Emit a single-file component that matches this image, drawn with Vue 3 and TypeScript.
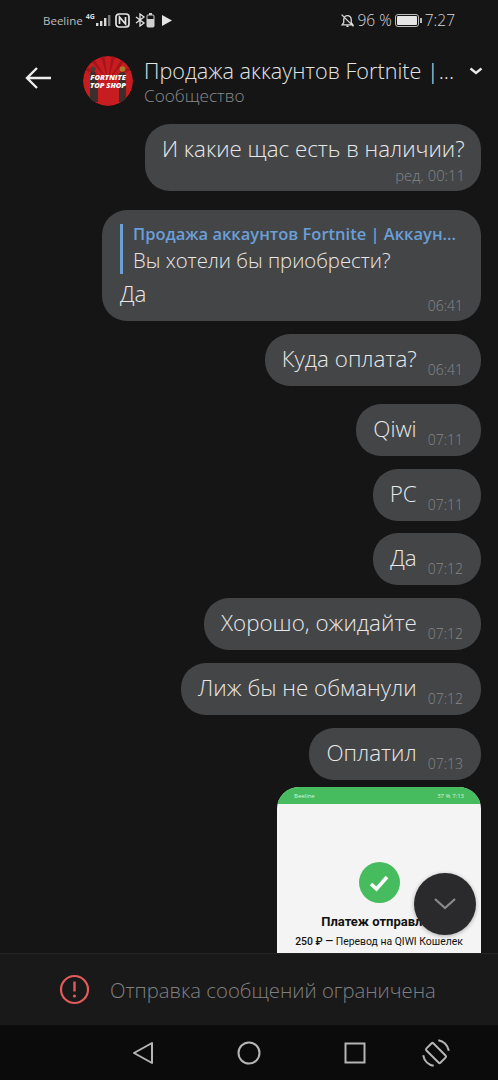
<script setup lang="ts">
interface Msg { text: string; time: string; gap?: boolean; tight?: boolean }
const messages: Msg[] = [
  { text: 'Куда оплата?', time: '06:41', gap: true },
  { text: 'Qiwi', time: '07:11' },
  { text: 'PC', time: '07:11', tight: true },
  { text: 'Да', time: '07:12' },
  { text: 'Хорошо, ожидайте', time: '07:12' },
  { text: 'Лиж бы не обманули', time: '07:12' },
  { text: 'Оплатил', time: '07:13' },
]
const rays = [-60, -36, -12, 12, 36, 60]
</script>

<template>
  <div class="screen">
    <div class="status">
      <div class="status-left">
        <span class="carrier">Beeline</span>
        <span class="net">4G</span>
        <svg width="16" height="13" viewBox="0 0 16 13"><g fill="#d8d8d8"><rect x="0" y="9" width="2.400" height="3"/><rect x="4" y="7" width="2.400" height="5"/><rect x="8" y="4" width="2.400" height="8"/><rect x="12" y="1" width="2.400" height="11" fill="#777"/></g></svg>
        <svg class="nfc" width="15" height="15" viewBox="0 0 15 15"><rect x="1" y="1" width="13" height="13" rx="3" fill="none" stroke="#e4e4e4" stroke-width="1.700"/><path d="M4.500 11V4l6 7V4" fill="none" stroke="#e4e4e4" stroke-width="1.700"/></svg>
        <svg class="bt" width="11" height="14" viewBox="0 0 11 14"><path d="M1 4l8 6-4 3V1l4 3-8 6" fill="none" stroke="#e4e4e4" stroke-width="1.300"/></svg>
        <svg class="batt" width="9" height="15" viewBox="0 0 9 15"><rect x="3" y="0" width="3" height="2" fill="#d0d0d0"/><rect x="1" y="2" width="7" height="12" rx="1" fill="none" stroke="#d0d0d0"/><rect x="1" y="6" width="7" height="8" fill="#d0d0d0"/></svg>
        <svg class="play" width="10" height="11" viewBox="0 0 10 11"><path d="M0 0l10 5.500L0 11z" fill="#e4e4e4"/></svg>
      </div>
      <div class="status-right">
        <svg width="15" height="15" viewBox="0 0 14 14"><path d="M2 11h10l-1.500-2V6a3.500 3.500 0 0 0-7 0v3zM6 12.500h2M1.500 1.500l11 11" fill="none" stroke="#dcdcdc" stroke-width="1.200"/></svg>
        <span class="pct">96 %</span>
        <svg width="27" height="13" viewBox="0 0 27 13"><rect x="0.500" y="0.500" width="23" height="12" rx="2.500" fill="none" stroke="#bbb"/><rect x="2" y="2" width="20" height="9" rx="1" fill="#e6e6e6"/><rect x="25" y="4" width="2" height="5" fill="#bbb"/></svg>
        <span class="pct">7:27</span>
      </div>
    </div>

    <header class="head">
      <svg class="back" width="28" height="24" viewBox="0 0 28 24"><path d="M26 12H2M12 2L2 12l10 10" fill="none" stroke="#ededed" stroke-width="2.400"/></svg>
      <div class="avatar">
        <svg class="avatar-art" width="50" height="50" viewBox="0 0 50 50">
          <circle cx="25" cy="25" r="25" fill="#c81d20"/>
          <path v-for="r in rays" :key="r" d="M25 25L23 -4h4z" fill="#a5141a" :transform="`rotate(${r} 25 25)`"/>
          <path d="M7 46V20q0-5 3-5t3 5l2 8v18zM36 46V21q0-5 3.500-5t3.500 5v25z" fill="#3a2f2c"/>
          <circle cx="10" cy="13" r="2.500" fill="#4a3b36"/>
          <circle cx="39.500" cy="13" r="2.800" fill="#a87a2a"/>
        </svg>
        <span class="logo-text">FORTNITE<br>TOP SHOP</span>
      </div>
      <div class="titles">
        <div class="title">Продажа аккаунтов Fortnite |...</div>
        <div class="sub">Сообщество</div>
      </div>
      <svg class="chev" width="14" height="9" viewBox="0 0 14 9"><path d="M1.500 1.500L7 6l5.500-4.500" fill="none" stroke="#e8e8e8" stroke-width="2.300"/></svg>
    </header>

    <main class="feed">
      <div class="bubble big">
        <div class="big-text">И какие щас есть в наличии?</div>
        <div class="time end">ред. 00:11</div>
      </div>

      <div class="bubble reply">
        <div class="quote">
          <div class="q-name">Продажа аккаунтов Fortnite | Аккаун...</div>
          <div class="q-text">Вы хотели бы приобрести?</div>
        </div>
        <div class="reply-foot">
          <span class="msg">Да</span>
          <span class="time">06:41</span>
        </div>
      </div>

      <div v-for="(m, i) in messages" :key="i" class="bubble line" :class="{ gap: m.gap, tight: m.tight }">
        <span class="msg">{{ m.text }}</span>
        <span class="time">{{ m.time }}</span>
      </div>

      <div class="shot">
        <div class="shot-bar">
          <span>Beeline</span>
          <span>37 % 7:13</span>
        </div>
        <div class="shot-body">
          <div class="check">
            <svg width="24" height="20" viewBox="0 0 24 20"><path d="M4 11l5.500 5L20 4" fill="none" stroke="#fff" stroke-width="3.600"/></svg>
          </div>
          <div class="shot-title">Платеж отправлен</div>
          <div class="shot-sub"><b>250 ₽ —</b> Перевод на QIWI Кошелек</div>
        </div>
      </div>

      <div class="fab">
        <svg width="24" height="14" viewBox="0 0 24 14"><path d="M2 2l10 9 10-9" fill="none" stroke="#8b8b8b" stroke-width="2.200"/></svg>
      </div>
    </main>

    <div class="limit">
      <svg width="31" height="31" viewBox="0 0 31 31"><circle cx="15.500" cy="15.500" r="13.500" fill="none" stroke="#e35a5a" stroke-width="2.200"/><path d="M15.500 7.500v10" stroke="#e35a5a" stroke-width="2.400"/><circle cx="15.500" cy="22" r="1.600" fill="#e35a5a"/></svg>
      <span>Отправка сообщений ограничена</span>
    </div>

    <nav class="nav">
      <svg class="n1" width="22" height="24" viewBox="0 0 22 24"><path d="M20 2v20L2 12z" fill="none" stroke="#b5b5b5" stroke-width="2" stroke-linejoin="round"/></svg>
      <svg class="n2" width="24" height="24" viewBox="0 0 24 24"><circle cx="12" cy="12" r="10.500" fill="none" stroke="#b5b5b5" stroke-width="2"/></svg>
      <svg class="n3" width="22" height="22" viewBox="0 0 22 22"><rect x="1.500" y="1.500" width="19" height="19" fill="none" stroke="#b5b5b5" stroke-width="2"/></svg>
      <svg class="n4" width="30" height="30" viewBox="0 0 30 30"><rect x="10" y="5" width="10" height="20" rx="1.500" transform="rotate(-45 15 15)" fill="none" stroke="#b5b5b5" stroke-width="2"/><path d="M17.300 2.200A13 13 0 0 1 27.800 12.700M12.700 27.800A13 13 0 0 1 2.200 17.300" fill="none" stroke="#b5b5b5" stroke-width="2"/></svg>
    </nav>
  </div>
</template>

<style scoped>
.screen {
  width: 498px;
  height: 1080px;
  display: flex;
  flex-direction: column;
  background: #151516;
  color: #e8e8e8;
  font-family: "Open Sans", "Noto Sans", sans-serif;
  font-weight: 300;
  overflow: hidden;
}
.status {
  height: 40px;
  flex: none;
  display: flex;
  align-items: center;
  justify-content: space-between;
  padding: 0 43px;
  box-sizing: border-box;
}
.status-left, .status-right {
  display: flex;
  align-items: center;
  gap: 3px;
}
.carrier {
  font-size: 11.500px;
  color: #bdbdbd;
  font-weight: 400;
}
.net {
  font-size: 7px;
  font-weight: 700;
  color: #ddd;
  margin: -8px -2px 0 0;
}
.bt { margin-left: 2px; }
.batt { margin-left: -3px; }
.play { margin-left: 4px; }
.pct {
  font-size: 15.500px;
  color: #d8d8d8;
}
.head {
  height: 76px;
  flex: none;
  display: flex;
  align-items: center;
  padding: 6px 15px 0 25px;
  box-sizing: border-box;
}
.back { flex: none; margin-bottom: 6px; }
.avatar {
  position: relative;
  width: 50px;
  height: 50px;
  margin-left: 30px;
  flex: none;
  border-radius: 50%;
  overflow: hidden;
}
.avatar-art { display: block; }
.logo-text {
  position: absolute;
  left: 0;
  right: 0;
  top: 17px;
  text-align: center;
  font-size: 7.500px;
  line-height: 8px;
  font-weight: 800;
  font-style: italic;
  color: #fff;
  white-space: nowrap;
}
.titles {
  margin-left: 11px;
  flex: 1;
  min-width: 0;
}
.title {
  font-size: 21.600px;
  line-height: 28px;
  color: #e4e4e4;
  white-space: nowrap;
  overflow: hidden;
}
.sub {
  font-size: 17.200px;
  line-height: 21px;
  color: #8a8a8a;
}
.chev { flex: none; margin-bottom: 20px; }
.feed {
  position: relative;
  flex: 1;
  min-height: 0;
  display: flex;
  flex-direction: column;
  align-items: flex-end;
  padding: 8px 17px 0 0;
  overflow: hidden;
}
.bubble {
  flex: none;
  background: #444547;
  border-radius: 25px;
  box-sizing: border-box;
  margin-bottom: 13px;
}
.big {
  width: 336px;
  height: 67px;
  padding: 9px 16px 0 17px;
  margin-bottom: 19px;
}
.big-text {
  font-size: 22.300px;
  line-height: 32px;
  white-space: nowrap;
}
.time {
  font-size: 14px;
  line-height: 16px;
  color: #848587;
  white-space: nowrap;
}
.end {
  text-align: right;
  font-size: 14.800px;
  margin-top: 2px;
}
.reply {
  width: 379px;
  height: 111px;
  padding: 14px 18px 0;
}
.quote {
  border-left: 3px solid #6a9fd8;
  padding-left: 10px;
  height: 50px;
}
.q-name {
  font-size: 16.500px;
  line-height: 20px;
  font-weight: 600;
  color: #6a9fd8;
  white-space: nowrap;
}
.q-text {
  font-size: 20.300px;
  line-height: 32px;
  color: #e8e8e8;
  white-space: nowrap;
}
.reply-foot {
  display: flex;
  justify-content: space-between;
  align-items: flex-end;
  margin-top: 5px;
}
.reply-foot .time { margin-bottom: -5px; }
.line {
  height: 52px;
  padding: 0 18px 0 17px;
  display: flex;
  align-items: center;
  gap: 11px;
}
.gap { margin-bottom: 18px; }
.tight { margin-bottom: 12px; }
.line .time { margin-top: 20px; }
.msg {
  font-size: 22.400px;
  line-height: 30px;
  white-space: nowrap;
}
.line .msg { margin-top: -3px; }
.shot {
  width: 204px;
  height: 180px;
  margin-top: -6px;
  flex: none;
  border-radius: 22px 22px 0 0;
  overflow: hidden;
  background: #f4f4f4;
}
.shot-bar {
  height: 17px;
  background: #46bc5e;
  display: flex;
  justify-content: space-between;
  align-items: center;
  padding: 0 17px;
  font-size: 6px;
  font-weight: 400;
  color: #d8f2dc;
}
.shot-body {
  display: flex;
  flex-direction: column;
  align-items: center;
  padding-top: 58px;
  color: #111;
  font-family: "Roboto", "Liberation Sans", sans-serif;
  font-weight: 400;
}
.check {
  width: 41px;
  height: 41px;
  border-radius: 50%;
  background: #46bc5e;
  display: flex;
  align-items: center;
  justify-content: center;
}
.shot-title {
  margin-top: 9px;
  font-size: 13px;
  line-height: 20px;
  font-weight: 700;
  white-space: nowrap;
}
.shot-sub {
  margin-top: 2px;
  font-size: 10.400px;
  line-height: 16px;
  white-space: nowrap;
}
.shot-sub b { font-weight: 500; }
.fab {
  position: absolute;
  left: 414px;
  top: 757px;
  width: 62px;
  height: 62px;
  border-radius: 50%;
  background: #2a2a2c;
  display: flex;
  align-items: center;
  justify-content: center;
  box-shadow: 0 1px 4px rgba(0, 0, 0, 0.3);
}
.limit {
  height: 72px;
  flex: none;
  box-sizing: border-box;
  border-top: 1px solid #242425;
  background: #19191a;
  display: flex;
  align-items: center;
  padding-left: 59px;
  gap: 20px;
  font-size: 20.300px;
  color: #808081;
}
.nav {
  height: 55px;
  flex: none;
  position: relative;
  background: #0b0b0b;
  display: flex;
  align-items: center;
  padding-left: 132px;
}
.n2 { margin-left: 83px; }
.n3 { margin-left: 83px; }
.n4 { margin-left: 55px; }
</style>
